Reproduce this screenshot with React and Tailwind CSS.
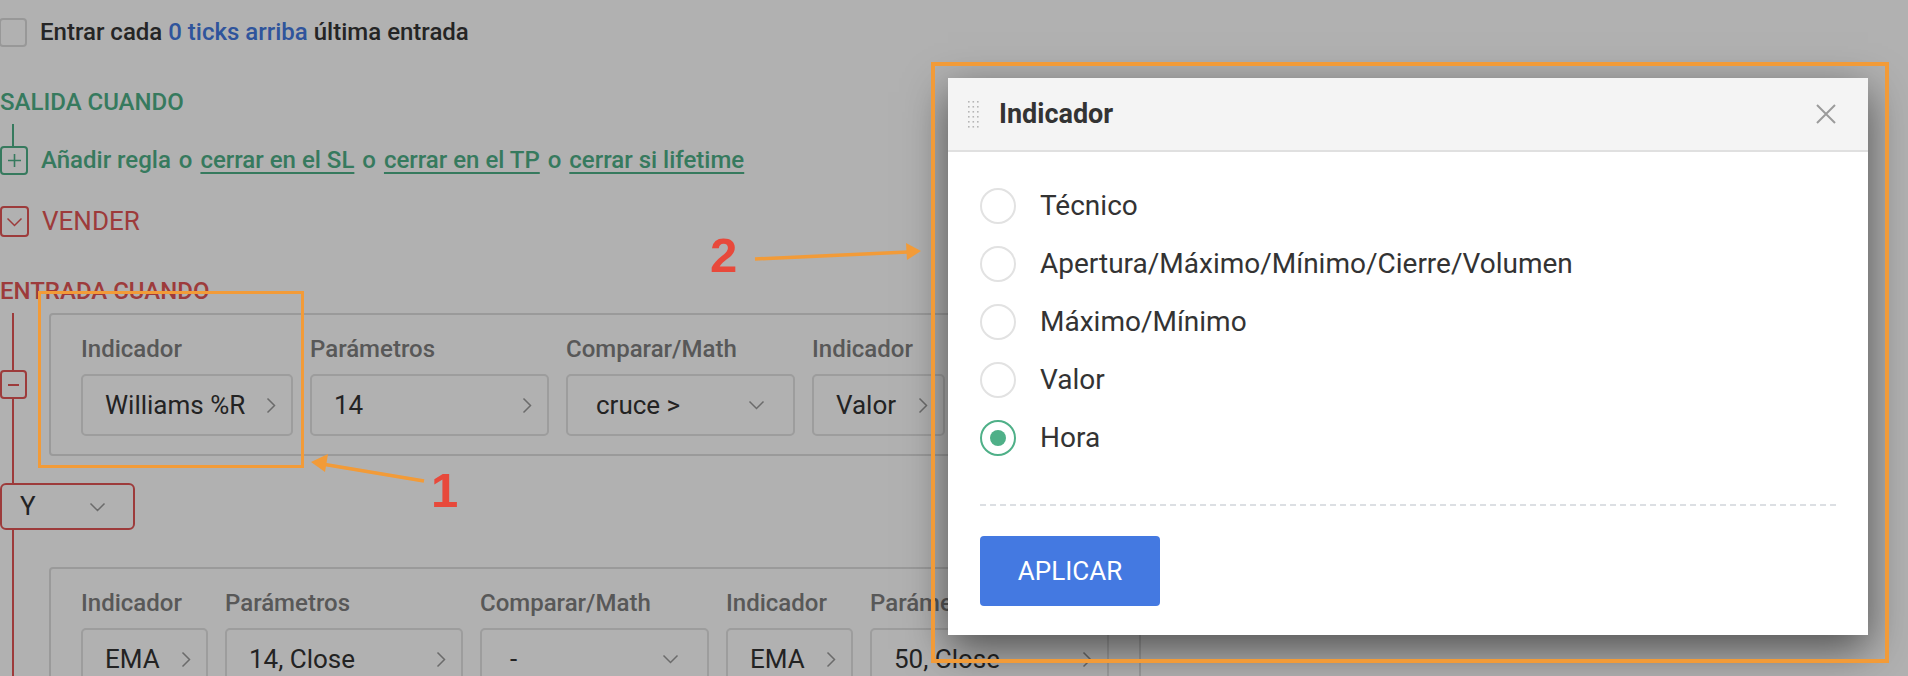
import React from 'react';

const RED = '#e35656';

function ChevronRight() {
  return (
    <svg width="10" height="17" viewBox="0 0 10 17" fill="none">
      <path d="M1.5 1.5 L8.5 8.5 L1.5 15.5" stroke="#9a9a9a" strokeWidth="1.5" />
    </svg>
  );
}

function ChevronDown({ color = '#9a9a9a' }) {
  return (
    <svg width="17" height="10" viewBox="0 0 17 10" fill="none">
      <path d="M1.5 1.5 L8.5 8.5 L15.5 1.5" stroke={color} strokeWidth="1.5" />
    </svg>
  );
}

// one column of a rule: label on top, field below
function Field({ label, value, width, select }) {
  return (
    <div className="flex flex-col gap-[12px] shrink-0" style={{ width }}>
      <div className="text-[24px] leading-[26px] font-medium text-[#7f7f7f] whitespace-nowrap">{label}</div>
      <div
        className={`h-[62px] rounded-[5px] border-2 border-[#e2e2e2] bg-white flex items-center justify-between text-[26px] text-[#333] whitespace-nowrap ${select ? 'pl-[28px] pr-[28px]' : 'pl-[22px] pr-[15px]'}`}
      >
        <span>{value}</span>
        {select ? <ChevronDown /> : <ChevronRight />}
      </div>
    </div>
  );
}

function RuleCard({ fields, className }) {
  return (
    <div className={`w-[1092px] shrink-0 rounded-[4px] border-2 border-[#dedede] bg-white pl-[30px] pt-[21px] pb-[18px] flex gap-[17px] ${className}`}>
      {fields.map((f, i) => (
        <Field key={i} {...f} />
      ))}
    </div>
  );
}

const options = ['Técnico', 'Apertura/Máximo/Mínimo/Cierre/Volumen', 'Máximo/Mínimo', 'Valor', 'Hora'];

export default function App() {
  return (
    <div className="relative w-[1908px] h-[676px] overflow-hidden bg-white font-['Roboto','Liberation_Sans',sans-serif] text-[#333]">
      {/* page content */}
      <div className="pt-[18px]">
        <div className="flex items-center gap-[13px] -ml-[1px]">
          <div className="w-[28px] h-[29px] rounded-[4px] border-2 border-[#dcdcdc] bg-white" />
          <div className="text-[24px] leading-[29px] font-medium text-[#363636]">
            Entrar cada <span className="text-[#4479e1]">0 ticks arriba</span> última entrada
          </div>
        </div>

        <div className="mt-[41px] text-[24px] leading-[29px] font-medium text-[#4fb088] uppercase">Salida cuando</div>
        <div className="mt-[7px] ml-[12px] w-[2px] h-[22px] bg-[#4fb088]" />
        <div className="flex items-center gap-[13px]">
          <div className="w-[28px] h-[29px] rounded-[4px] border-2 border-[#4fb088] bg-white flex items-center justify-center">
            <svg width="13" height="13" viewBox="0 0 13 13">
              <path d="M6.5 0 V13 M0 6.5 H13" stroke="#4fb088" strokeWidth="1.6" />
            </svg>
          </div>
          <div className="text-[24px] leading-[29px] font-medium text-[#4fb088] whitespace-nowrap">
            Añadir regla <span className="mx-[2px]">o</span> <span className="underline underline-offset-4">cerrar en el SL</span>{' '}
            <span className="mx-[2px]">o</span> <span className="underline underline-offset-4">cerrar en el TP</span>{' '}
            <span className="mx-[2px]">o</span> <span className="underline underline-offset-4">cerrar si lifetime</span>
          </div>
        </div>

        <div className="mt-[31px] flex items-center gap-[13px]">
          <div className="w-[29px] h-[31px] rounded-[4px] border-2 border-[#e35656] bg-white flex items-center justify-center">
            <ChevronDown color={RED} />
          </div>
          <div className="text-[26px] leading-[31px] text-[#e35656]">VENDER</div>
        </div>

        <div className="mt-[40px] text-[24px] leading-[29px] font-medium text-[#e35656] uppercase">Entrada cuando</div>

        <div className="mt-[7px] ml-[12px] border-l-2 border-[#e35656] pb-[40px]">
          <div className="flex items-center">
            <div className="-ml-[14px] w-[27px] h-[29px] rounded-[4px] border-2 border-[#e35656] bg-white flex items-center justify-center">
              <div className="w-[11px] h-[2px] bg-[#e35656]" />
            </div>
            <RuleCard
              className="ml-[22px]"
              fields={[
                { label: 'Indicador', value: 'Williams %R', width: 212 },
                { label: 'Parámetros', value: '14', width: 239 },
                { label: 'Comparar/Math', value: 'cruce >', width: 229, select: true },
                { label: 'Indicador', value: 'Valor', width: 133 },
                { label: 'Parámetros', value: '50', width: 239 },
              ]}
            />
          </div>

          <div className="mt-[27px] -ml-[14px] w-[135px] h-[47px] rounded-[6px] border-2 border-[#e35656] bg-white flex items-center justify-between pl-[18px] pr-[27px]">
            <span className="text-[26px] text-[#333]">Y</span>
            <ChevronDown />
          </div>

          <RuleCard
            className="mt-[37px] ml-[35px]"
            fields={[
              { label: 'Indicador', value: 'EMA', width: 127 },
              { label: 'Parámetros', value: '14, Close', width: 238 },
              { label: 'Comparar/Math', value: '-', width: 229, select: true },
              { label: 'Indicador', value: 'EMA', width: 127 },
              { label: 'Parámetros', value: '50, Close', width: 239 },
            ]}
          />
        </div>
      </div>

      {/* dim backdrop */}
      <div className="absolute inset-0 bg-[rgba(0,0,0,0.305)]" />

      {/* modal */}
      <div className="absolute left-[948px] top-[78px] w-[920px] h-[557px] bg-white shadow-[0_14px_40px_rgba(0,0,0,0.55)] flex flex-col">
        <div className="h-[74px] bg-[#f4f4f4] border-b-2 border-[#e0e0e0] flex items-center pl-[20px] pr-[32px]">
          <svg width="11" height="27" viewBox="0 0 11 27">
            {[0, 1, 2].map((c) =>
              [0, 1, 2, 3, 4, 5].map((r) => (
                <rect key={`${c}-${r}`} x={c * 4.5} y={r * 5} width="1.6" height="1.6" fill="#b5b5b5" />
              ))
            )}
          </svg>
          <div className="ml-[20px] text-[27px] font-bold text-[#333]">Indicador</div>
          <svg className="ml-auto" width="20" height="20" viewBox="0 0 20 20">
            <path d="M1 1 L19 19 M19 1 L1 19" stroke="#9b9b9b" strokeWidth="2" />
          </svg>
        </div>

        <div className="px-[32px] pt-[36px]">
          <div className="flex flex-col gap-[22px]">
            {options.map((o) => {
              const on = o === 'Hora';
              return (
                <div key={o} className="flex items-center gap-[24px] h-[36px]">
                  <div
                    className={`w-[36px] h-[36px] rounded-full border-2 flex items-center justify-center ${on ? 'border-[#4fb088]' : 'border-[#e2e2e2]'}`}
                  >
                    {on && <div className="w-[16px] h-[16px] rounded-full bg-[#4fb088]" />}
                  </div>
                  <span className="text-[28px] text-[#333]">{o}</span>
                </div>
              );
            })}
          </div>
          <div className="mt-[48px] border-t-2 border-dashed border-[#dcdfe3]" />
          <button className="mt-[30px] w-[180px] h-[70px] rounded-[4px] bg-[#4479e1] text-white text-[26px]">APLICAR</button>
        </div>
      </div>

      {/* annotations */}
      <div className="absolute left-[38px] top-[291px] w-[266px] h-[177px] border-[3px] border-[#f29b38]" />
      <div className="absolute left-[931px] top-[62px] w-[958px] h-[601px] border-[4px] border-[#f29b38]" />
      <svg className="absolute left-0 top-0 pointer-events-none" width="1908" height="676">
        <path d="M424 481 L322 464" stroke="#f29b38" strokeWidth="3.5" />
        <path d="M311 462 L328 454 L325 472 Z" fill="#f29b38" />
        <path d="M755 259 L908 252" stroke="#f29b38" strokeWidth="3.5" />
        <path d="M921 251 L906 243 L907 260 Z" fill="#f29b38" />
      </svg>
      <div className="absolute left-[431px] top-[462px] text-[49px] leading-[56px] font-bold text-[#e8493b] font-['Liberation_Sans',sans-serif]">1</div>
      <div className="absolute left-[710px] top-[227px] text-[49px] leading-[56px] font-bold text-[#e8493b] font-['Liberation_Sans',sans-serif]">2</div>
    </div>
  );
}
